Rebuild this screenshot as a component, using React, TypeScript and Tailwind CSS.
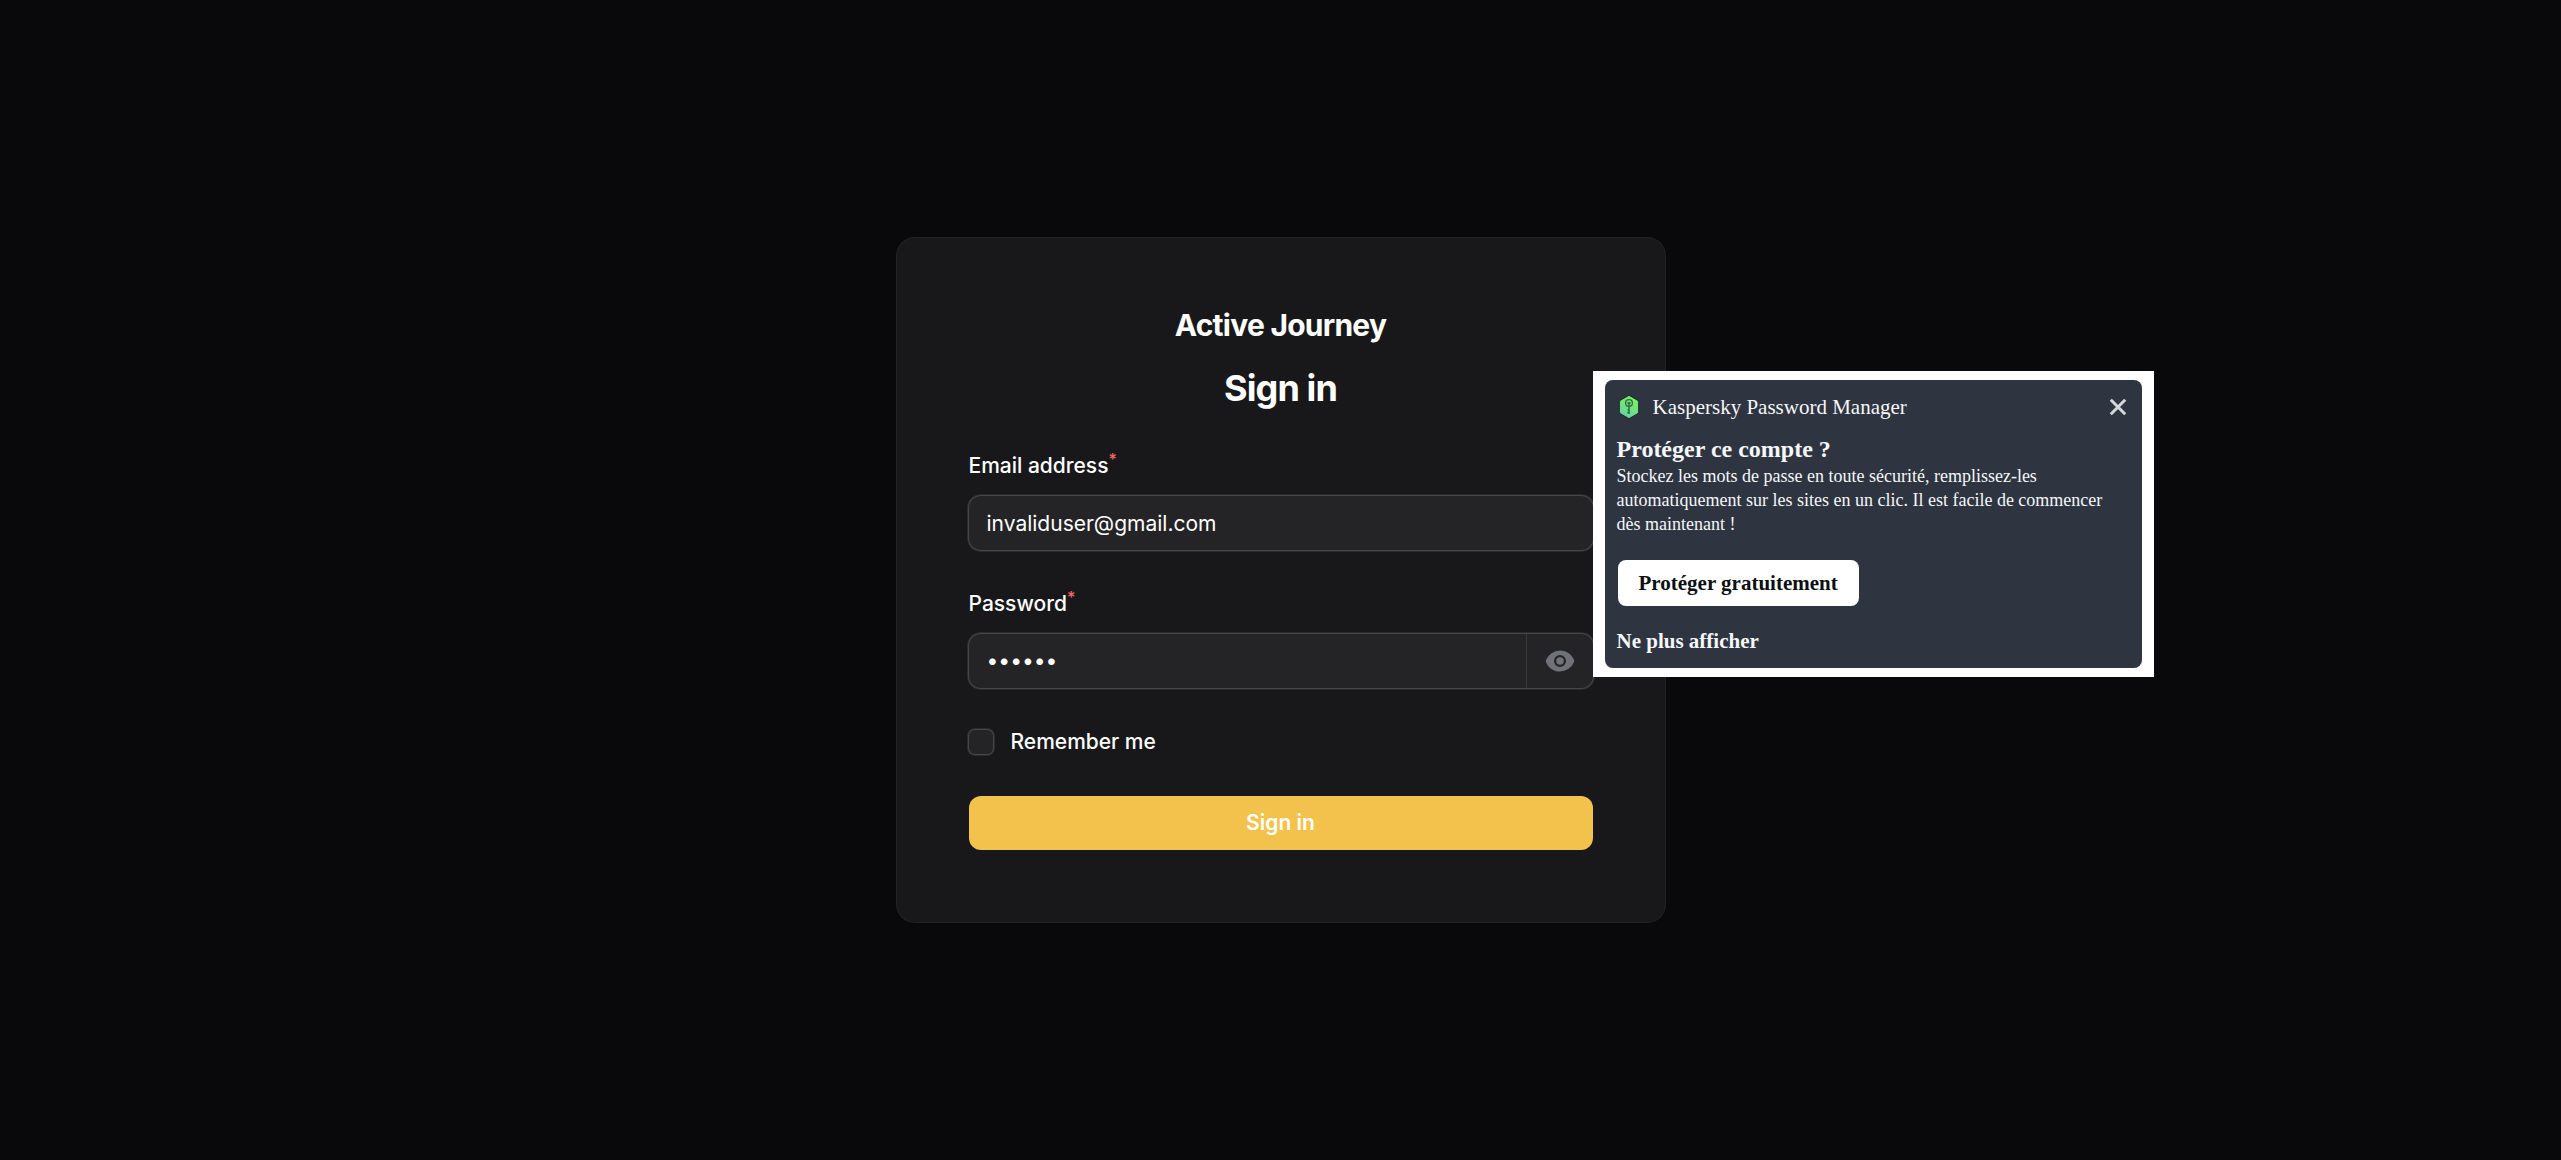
import { useState } from "react";

function KeyLogo() {
  return (
    <svg viewBox="0 0 24 26" className="h-[26px] w-6 shrink-0" aria-hidden="true">
      <defs>
        <linearGradient id="hex" x1="0.7" y1="0" x2="0.3" y2="1">
          <stop offset="0" stopColor="#7df25c" />
          <stop offset="1" stopColor="#66d3a2" />
        </linearGradient>
      </defs>
      <path d="M12 1 21.8 6.6V19.4L12 25 2.2 19.4V6.6Z" fill="#1f3335" stroke="#1f3335" strokeWidth="1" strokeLinejoin="round" />
      <path d="M12 2.4 20.6 7.3V18.7L12 23.6 3.4 18.7V7.3Z" fill="url(#hex)" stroke="url(#hex)" strokeWidth="1" strokeLinejoin="round" />
      <circle cx="12" cy="9" r="3.4" fill="none" stroke="#2c6b45" strokeWidth="1.3" />
      <path d="M10.6 8.2 12 9.8l1.4-1.6M12 9.8V20" fill="none" stroke="#2c6b45" strokeWidth="1.5" />
      <path d="M12 16h-1.8M12 18.6h-1.8" fill="none" stroke="#2c6b45" strokeWidth="1.2" />
    </svg>
  );
}

function SaveAccountPopup() {
  return (
    <aside className="absolute left-full top-[133px] -ml-[72px] w-[561px] bg-white px-3 py-[9px] font-['Liberation_Serif',serif] text-[#f5f7fa]">
      <div className="flex flex-col items-start rounded-lg bg-[#2e3540] p-3">
        <header className="flex w-full items-center">
          <KeyLogo />
          <span className="ml-3 flex-1 text-[21px] leading-[30px]">Kaspersky Password Manager</span>
          <button type="button" aria-label="Fermer" className="mr-0.5 flex size-5 items-center justify-center">
            <svg viewBox="0 0 20 20" className="size-5" fill="none" stroke="#d5d7d9" strokeWidth="3">
              <path d="M2.8 2.8 17.2 17.2M17.2 2.8 2.8 17.2" />
            </svg>
          </button>
        </header>
        <h2 className="mt-3 text-2xl font-bold leading-[30px]">Protéger ce compte ?</h2>
        <p className="text-lg leading-6">
          Stockez les mots de passe en toute sécurité, remplissez-les automatiquement sur les sites en un clic. Il est facile de commencer dès maintenant !
        </p>
        <button type="button" className="ml-px mt-6 rounded-lg bg-white px-[21px] text-[21px] font-bold leading-[46px] text-[#0d0f12]">
          Protéger gratuitement
        </button>
        <button type="button" className="mt-5 text-[21px] font-bold leading-[30px]">
          Ne plus afficher
        </button>
      </div>
    </aside>
  );
}

function FieldLabel({ htmlFor, children }: { htmlFor: string; children: string }) {
  return (
    <label htmlFor={htmlFor} className="text-[21px] font-medium leading-9">
      {children}
      <sup className="text-base font-medium text-red-400">*</sup>
    </label>
  );
}

export default function App() {
  const [email, setEmail] = useState("invaliduser@gmail.com");
  const [password, setPassword] = useState("secret");
  const [visible, setVisible] = useState(false);

  return (
    <div className="flex min-h-screen items-center justify-center bg-[#09090b] font-['Inter',sans-serif] text-white">
      <main className="relative w-full max-w-3xl rounded-[18px] bg-[#18181b] p-[72px] ring-1 ring-[#232326]">
        <header className="flex flex-col items-center gap-6">
          <div className="text-[30px] font-bold leading-[30px] tracking-tight">Active Journey</div>
          <h1 className="text-4xl font-bold leading-[48px] tracking-tight">Sign in</h1>
        </header>
        <form className="mt-9 flex flex-col gap-9" onSubmit={(e) => e.preventDefault()}>
          <div className="flex flex-col gap-3">
            <FieldLabel htmlFor="email">Email address</FieldLabel>
            <input
              id="email"
              type="email"
              value={email}
              onChange={(e) => setEmail(e.target.value)}
              className="h-[54px] w-full rounded-xl bg-[#242427] px-[18px] text-[21px] leading-9 shadow-[0_0_0_2px_#2b2b2e] outline-none ring-1 ring-[#464649]"
            />
          </div>
          <div className="flex flex-col gap-3">
            <FieldLabel htmlFor="password">Password</FieldLabel>
            <div className="flex h-[54px] rounded-xl bg-[#242427] shadow-[0_0_0_2px_#2b2b2e] ring-1 ring-[#464649]">
              <input
                id="password"
                type={visible ? "text" : "password"}
                value={password}
                onChange={(e) => setPassword(e.target.value)}
                className="min-w-0 flex-1 bg-transparent px-[18px] text-[21px] leading-9 outline-none"
              />
              <button
                type="button"
                aria-label="Show password"
                onClick={() => setVisible(!visible)}
                className="flex w-[67px] items-center justify-center border-l border-[#39393c] text-[#71717a]"
              >
                <svg viewBox="0 0 20 20" fill="currentColor" className="size-[30px]">
                  <path d="M10 12.5a2.5 2.5 0 1 0 0-5 2.5 2.5 0 0 0 0 5Z" />
                  <path
                    fillRule="evenodd"
                    clipRule="evenodd"
                    d="M.664 10.59a1.651 1.651 0 0 1 0-1.186A10.004 10.004 0 0 1 10 3c4.257 0 7.893 2.66 9.336 6.41.147.381.146.804 0 1.186A10.004 10.004 0 0 1 10 17c-4.257 0-7.893-2.66-9.336-6.41ZM14 10a4 4 0 1 1-8 0 4 4 0 0 1 8 0Z"
                  />
                </svg>
              </button>
            </div>
          </div>
          <label htmlFor="remember" className="flex items-center gap-[18px] text-[21px] font-medium leading-9">
            <input
              id="remember"
              type="checkbox"
              className="size-6 appearance-none rounded-md bg-[#242427] shadow-[0_0_0_2px_#2b2b2e] ring-1 ring-[#464649] checked:bg-[#f3c24c]"
            />
            Remember me
          </label>
          <button type="submit" className="h-[54px] rounded-xl bg-[#f3c24c] text-[21px] font-semibold leading-9">
            Sign in
          </button>
        </form>
        <SaveAccountPopup />
      </main>
    </div>
  );
}
